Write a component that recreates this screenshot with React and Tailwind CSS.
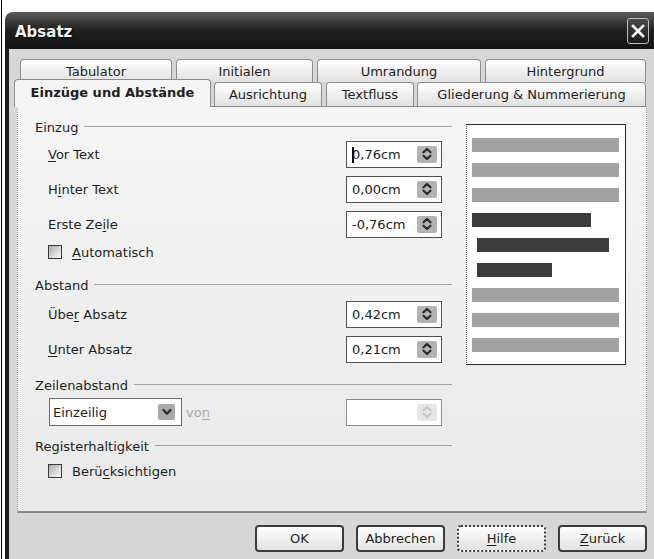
import React from "react";

// Mnemonic (access-key) letter, drawn underlined like a native dialog label
const Mn = ({ children }) => (
  <span className="underline decoration-1 underline-offset-[2px]">{children}</span>
);

function SpinArrows({ faded }) {
  return (
    <div
      className={`flex h-[17px] w-[20px] items-center justify-center rounded-[2px] ${
        faded ? "bg-[#e6e6e6]" : "bg-[#b3b3b3]"
      }`}
    >
      <svg
        width="12"
        height="14"
        viewBox="0 0 12 14"
        fill="none"
        stroke={faded ? "#c6c6c6" : "#2b2b2b"}
        strokeWidth="2.2"
        strokeLinecap="round"
        strokeLinejoin="round"
      >
        <path d="M2.5 5.3 L6 2 L9.5 5.3" />
        <path d="M2.5 8.7 L6 12 L9.5 8.7" />
      </svg>
    </div>
  );
}

function SpinBox({ value, caret, disabled }) {
  return (
    <div
      className={`ml-auto mr-[10px] flex h-[27px] w-[96px] items-center border bg-white pl-[5px] pr-[4px] ${
        disabled ? "border-[#8c8c8c]" : "border-[#505050]"
      }`}
    >
      <span className="relative flex-1 text-[#1a1a1a]">
        {caret && <span className="absolute left-0 top-[-1px] h-[16px] w-[2px] bg-black" />}
        {value}
      </span>
      <SpinArrows faded={disabled} />
    </div>
  );
}

function FieldRow({ label, value, caret, className }) {
  return (
    <div className={`flex h-[26px] items-center ${className}`}>
      <span className="pl-[13px]">{label}</span>
      <SpinBox value={value} caret={caret} />
    </div>
  );
}

function GroupHeader({ title, className }) {
  return (
    <div className={`flex h-[20px] items-center ${className}`}>
      <span>{title}</span>
      <div className="ml-[6px] mt-[-2px] h-px flex-1 bg-[#a4a4a4]" />
    </div>
  );
}

function Check({ label, className }) {
  return (
    <div className={`flex h-[16px] items-center pl-[13px] ${className}`}>
      <div className="h-[14px] w-[14px] border border-[#3a3a3a] bg-gradient-to-br from-[#aaaaaa] to-white" />
      <span className="ml-[10px]">{label}</span>
    </div>
  );
}

function Tab({ children, className }) {
  return (
    <div
      className={`flex items-center justify-center rounded-t-[4px] border border-b-0 border-[#8e8e8e] bg-gradient-to-b from-white to-[#e1e1e1] ${className}`}
    >
      {children}
    </div>
  );
}

function Btn({ children, dotted }) {
  return (
    <div
      className={`flex h-[27px] w-[89px] items-center justify-center rounded-[4px] border-2 bg-gradient-to-b from-white to-[#e2e2e2] ${
        dotted ? "border-dotted border-[#3c3c3c]" : "border-[#3c3c3c]"
      }`}
    >
      {children}
    </div>
  );
}

// Sample paragraph lines shown in the preview: surrounding text grey, current paragraph dark
const previewLines = [
  { w: 147, indent: false, dark: false },
  { w: 147, indent: false, dark: false },
  { w: 147, indent: false, dark: false },
  { w: 119, indent: false, dark: true },
  { w: 132, indent: true, dark: true },
  { w: 75, indent: true, dark: true },
  { w: 147, indent: false, dark: false },
  { w: 147, indent: false, dark: false },
  { w: 147, indent: false, dark: false },
];

export default function App() {
  return (
    <div className="flex h-[559px] w-[654px] overflow-hidden bg-white font-['DejaVu_Sans',sans-serif] text-[13px] leading-none text-[#1e1e1e]">
      <div className="ml-[1px] w-[1px] bg-black" />
      <div className="ml-[3px] mt-[12px] flex flex-1 flex-col">
        {/* Title bar */}
        <div className="flex h-[37px] items-center rounded-tl-[8px] bg-gradient-to-b from-[#5c5c5c] via-[#1f1f1f] to-[#141414] pl-[10px] pr-[5px]">
          <span className="flex-1 pt-[3px] text-[15px] font-bold text-[#f4f4f4] [text-shadow:1px_1px_1px_#000]">
            Absatz
          </span>
          <div className="flex h-[26px] w-[22px] items-center justify-center rounded-[3px] border border-[#bdbdbd] bg-gradient-to-b from-[#4a4a4a] to-[#1a1a1a]">
            <svg width="14" height="14" viewBox="0 0 14 14" stroke="white" strokeWidth="2.6" strokeLinecap="square">
              <path d="M2 2 L12 12 M12 2 L2 12" />
            </svg>
          </div>
        </div>

        {/* Dialog body */}
        <div className="flex flex-1 flex-col border-l-4 border-[#1c1c1c] bg-[#d7d7d7] pl-[8px] pr-[7px]">
          {/* Tab strip, two rows */}
          <div className="mt-[10px] flex h-[47px] flex-col">
            <div className="flex h-[23px]">
              <Tab className="ml-[3px] w-[152px]">Tabulator</Tab>
              <Tab className="ml-[4px] w-[137px]">Initialen</Tab>
              <Tab className="ml-[4px] w-[164px]">Umrandung</Tab>
              <Tab className="ml-[4px] w-[161px]">Hintergrund</Tab>
            </div>
            <div className="flex h-[24px] items-end">
              <div className="relative z-10 -mb-px -ml-[3px] flex h-[28px] w-[197px] items-center justify-center rounded-t-[4px] border border-b-0 border-[#8e8e8e] bg-[#f5f5f5] pb-[3px] font-bold">
                Einzüge und Abstände
              </div>
              <Tab className="ml-[3px] h-[24px] w-[108px]">Ausrichtung</Tab>
              <Tab className="ml-[4px] h-[24px] w-[88px]">Textfluss</Tab>
              <Tab className="ml-[3px] h-[24px] w-[229px]">Gliederung &amp; Nummerierung</Tab>
            </div>
          </div>

          {/* Tab page */}
          <div className="flex h-[407px] border-x border-t border-b-2 border-x-[#9c9c9c] border-t-[#8e8e8e] border-b-[#8a8a8a] border-dotted [border-top-style:solid] [border-bottom-style:solid] bg-gradient-to-b from-[#f5f5f5] to-[#e9e9e9] pl-[17px]">
            <div className="flex w-[417px] flex-col">
              <GroupHeader title="Einzug" className="mt-[10px]" />
              <FieldRow className="mt-[4px]" label={<><Mn>V</Mn>or Text</>} value="0,76cm" caret />
              <FieldRow className="mt-[9px]" label={<>H<Mn>i</Mn>nter Text</>} value="0,00cm" />
              <FieldRow className="mt-[9px]" label={<>Erste Ze<Mn>i</Mn>le</>} value="-0,76cm" />
              <Check className="mt-[7px]" label={<><Mn>A</Mn>utomatisch</>} />

              <GroupHeader title="Abstand" className="mt-[15px]" />
              <FieldRow className="mt-[6px]" label={<>Übe<Mn>r</Mn> Absatz</>} value="0,42cm" />
              <FieldRow className="mt-[9px]" label={<><Mn>U</Mn>nter Absatz</>} value="0,21cm" />

              <GroupHeader title="Zeilenabstand" className="mt-[13px]" />
              <div className="mt-[3px] flex h-[28px] items-center">
                <div className="ml-[14px] flex h-[28px] w-[133px] items-center border border-[#6c6c6c] bg-white pl-[3px] pr-[6px]">
                  <span className="flex-1">Einzeilig</span>
                  <div className="flex h-[16px] w-[17px] items-center justify-center rounded-[2px] bg-[#a9a9a9]">
                    <svg width="10" height="8" viewBox="0 0 10 8" fill="none" stroke="#2a2a2a" strokeWidth="2.2" strokeLinecap="round" strokeLinejoin="round">
                      <path d="M1.5 2 L5 5.8 L8.5 2" />
                    </svg>
                  </div>
                </div>
                <span className="ml-[4px] text-[#a9a9a9]">
                  vo<Mn>n</Mn>
                </span>
                <SpinBox value="" disabled />
              </div>

              <GroupHeader title="Registerhaltigkeit" className="mt-[10px]" />
              <Check className="mt-[7px]" label={<>Berü<Mn>c</Mn>ksichtigen</>} />
            </div>

            {/* Paragraph preview */}
            <div className="ml-[14px] mt-[17px] flex h-[241px] w-[160px] flex-col gap-[11px] border border-[#2a2a2a] border-l-[#555] [border-left-style:dotted] bg-white pl-[5px] pt-[13px]">
              {previewLines.map((l, i) => (
                <div
                  key={i}
                  className={`h-[14px] ${l.dark ? "bg-[#3c3c3c]" : "bg-[#a2a2a2]"} ${l.indent ? "ml-[5px]" : ""}`}
                  style={{ width: l.w }}
                />
              ))}
            </div>
          </div>

          {/* Button row */}
          <div className="mt-[12px] flex justify-end gap-[12px]">
            <Btn>OK</Btn>
            <Btn>Abbrechen</Btn>
            <Btn dotted>
              <span>
                <Mn>H</Mn>ilfe
              </span>
            </Btn>
            <Btn>
              <span>
                <Mn>Z</Mn>urück
              </span>
            </Btn>
          </div>
        </div>
      </div>
    </div>
  );
}
